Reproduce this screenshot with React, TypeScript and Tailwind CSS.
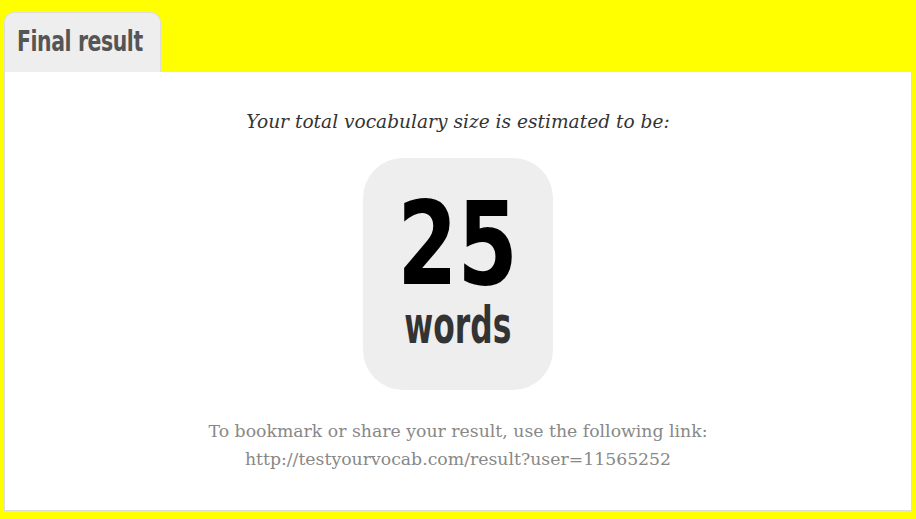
export default function App() {
  const impact = {
    fontFamily: "Impact, 'DejaVu Sans Condensed', 'DejaVu Sans', sans-serif",
  };
  return (
    <div className="w-[916px] h-[519px] bg-[#ffff00] pt-3 pl-1 pr-1 pb-2 flex flex-col">
      {/* Tab */}
      <div className="flex">
        <div className="w-[157px] h-[60px] bg-[#eeeeee] rounded-t-[10px] border border-b-0 border-[#dddddd] pl-3 pt-[15px] overflow-hidden">
          <span
            className="inline-block origin-left scale-x-[0.81] whitespace-nowrap text-[28px] font-bold text-[#555555] leading-none tracking-[-0.5px]"
            style={impact}
          >
            Final result
          </span>
        </div>
      </div>

      {/* Panel */}
      <div className="flex-1 bg-white border border-t-0 border-[#dddddd] flex flex-col items-center font-['DejaVu_Serif',serif]">
        <p className="mt-[41px] italic text-[18.6px] text-[#333333] leading-none">
          Your total vocabulary size is estimated to be:
        </p>

        <div className="mt-[26px] w-[190px] h-[232px] bg-[#eeeeee] rounded-[40px] flex flex-col items-center">
          <span
            className="mt-[37px] inline-block scale-x-[0.83] whitespace-nowrap text-[116px] font-bold text-black leading-[0.85]"
            style={impact}
          >
            25
          </span>
          <span
            className="mt-[6px] inline-block scale-x-[0.67] whitespace-nowrap text-[52px] font-bold text-[#333333] leading-none"
            style={impact}
          >
            words
          </span>
        </div>

        <div className="mt-[27px] text-[17.3px] text-[#888888] leading-[28px] text-center">
          <p>To bookmark or share your result, use the following link:</p>
          <p>http://testyourvocab.com/result?user=11565252</p>
        </div>
      </div>
    </div>
  );
}
